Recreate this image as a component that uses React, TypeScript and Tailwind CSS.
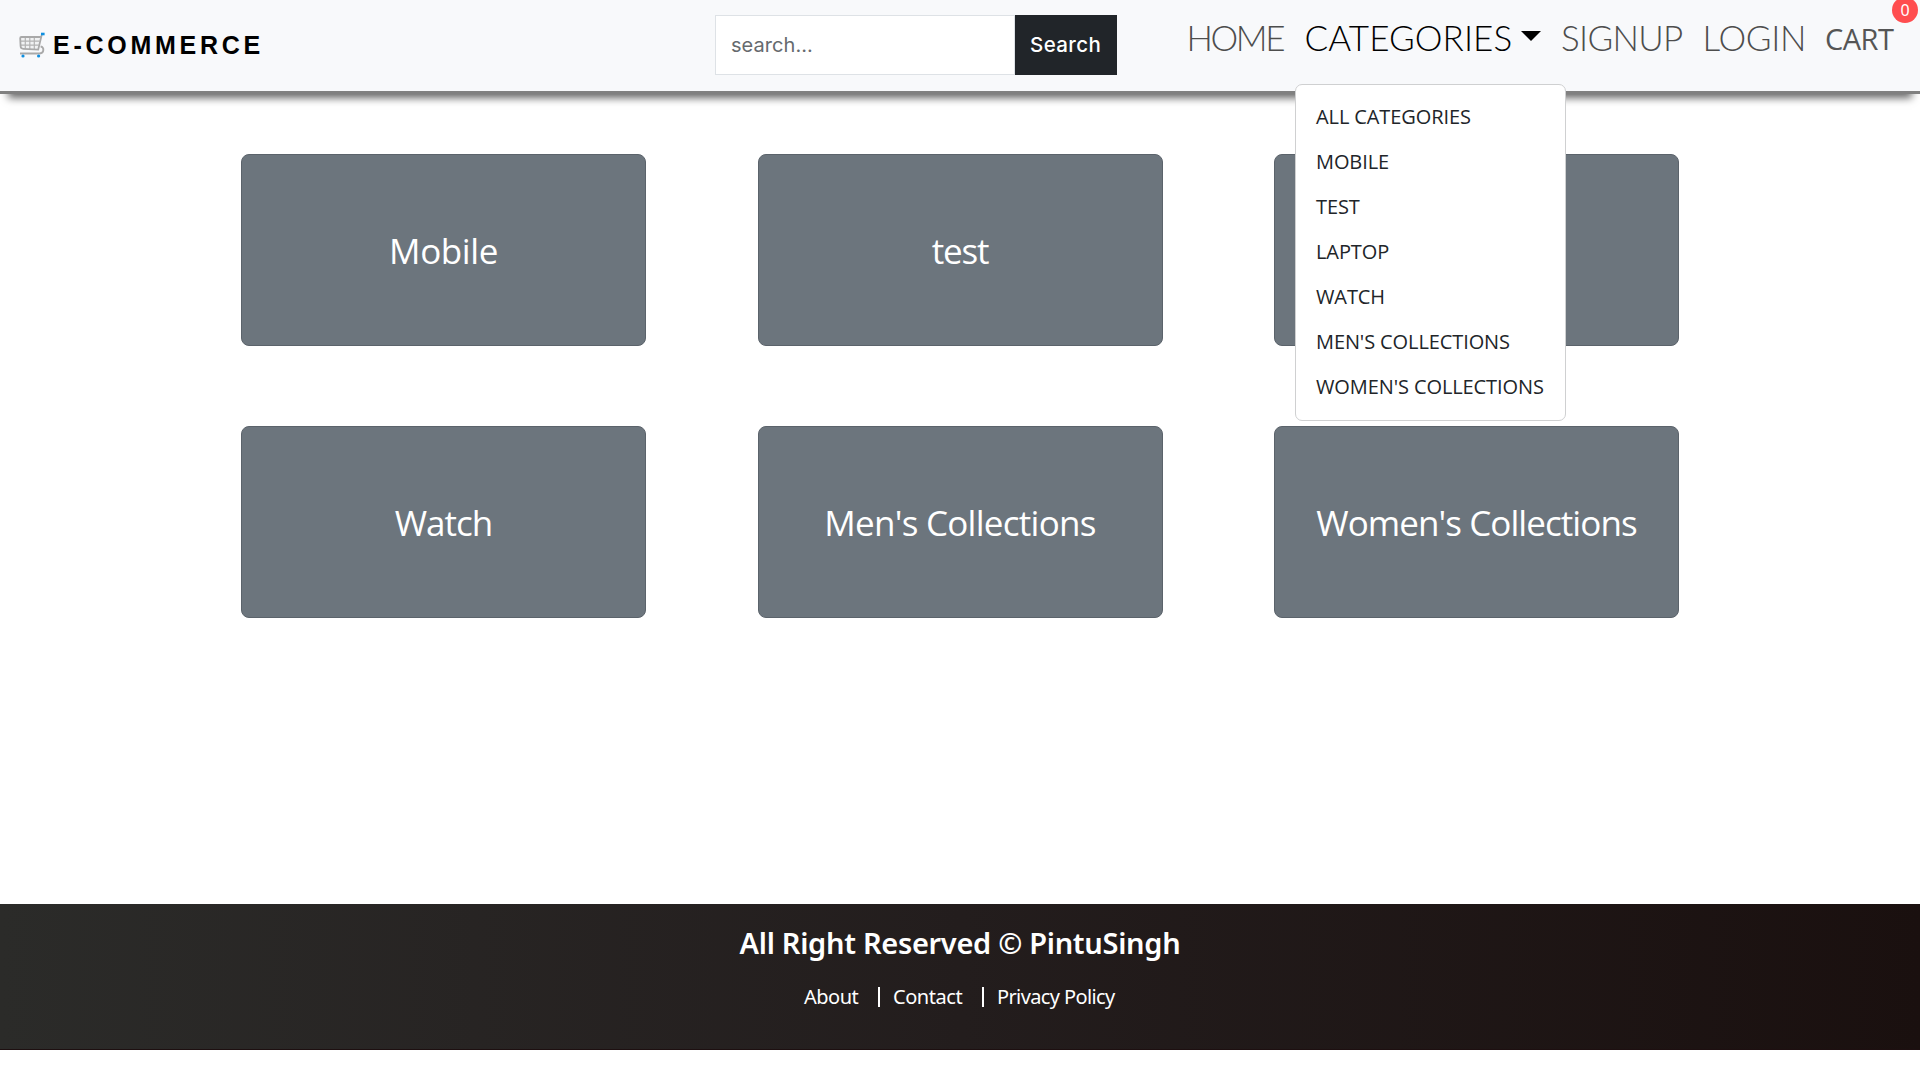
const menuItems = [
  'ALL CATEGORIES',
  'MOBILE',
  'TEST',
  'LAPTOP',
  'WATCH',
  "MEN'S COLLECTIONS",
  "WOMEN'S COLLECTIONS",
];

const cards = [
  { label: 'Mobile', tracking: 'tracking-[-0.4px]' },
  { label: 'test', tracking: 'tracking-[-1.2px]' },
  { label: 'Laptop', tracking: 'tracking-[-0.7px]' },
  { label: 'Watch', tracking: 'tracking-[-1px]' },
  { label: "Men's Collections", tracking: 'tracking-[-0.72px]' },
  { label: "Women's Collections", tracking: 'tracking-[-0.93px]' },
];

function CartLogo() {
  return (
    <svg width="26" height="27" viewBox="0 0 26 27" fill="none" className="shrink-0">
      <path d="M1.5 5.2H21.3L19 17.5L4 16.8C2.6 16.7 1.8 15.8 1.7 14.5Z" fill="#f1f2f3" />
      <path d="M1.5 9.2H20.5M1.8 13.2H19.7M6.3 5V16.8M10.8 5V17M15.3 5V17.2" stroke="#b3b3b3" strokeWidth="1.2" />
      <path d="M22.8 2.6L19.2 17.6L4.2 16.8C2.7 16.7 1.7 15.8 1.6 14.3L1.2 6.2C1.2 5.4 1.6 5 2.4 5H21.5" stroke="#a9a9a9" strokeWidth="1.8" />
      <path d="M21.6 14.3C25.6 15.2 25.2 21.4 20.8 21.5H1" stroke="#a9a9a9" strokeWidth="1.8" />
      <path d="M22 2H25.6" stroke="#0f8fe0" strokeWidth="2.6" />
      <circle cx="4" cy="24" r="1.6" fill="#0f8fe0" />
      <circle cx="19.6" cy="24" r="1.6" fill="#0f8fe0" />
    </svg>
  );
}

function Header() {
  return (
    <header className="relative z-10 flex h-[94px] border-b-[3px] border-[#808080] bg-[#f8f9fb] shadow-[0_12px_8px_-8px_rgba(0,0,0,0.6)]">
      <div className="flex w-[715px] items-center pl-[19px] font-['Liberation_Sans',sans-serif] text-[25px] font-bold tracking-[3.73px] text-black">
        <CartLogo />
        <span className="ml-[8px]">E-COMMERCE</span>
      </div>

      <form className="mt-[15px] flex h-[60px] w-[402px] font-['Inter',sans-serif] text-[20px]">
        <input
          className="w-[300px] border border-[#dee2e6] bg-white pl-[15px] tracking-[0.05px] outline-none placeholder:text-[#666a6e]"
          placeholder="search..."
        />
        <button type="button" className="w-[102px] bg-[#212529] pl-[15px] text-left text-[20.5px] font-medium tracking-[0.4px] text-white">
          Search
        </button>
      </form>

      <nav className="ml-[69.5px] flex font-['Lato',sans-serif] text-[35px] leading-[42px] font-light text-[#4d4d4d]">
        <a className="w-[118px] pt-[16px] tracking-[-2.4px]">HOME</a>
        <div className="relative w-[256.5px] pt-[16px]">
          <a className="flex tracking-[0.08px] text-black">
            CATEGORIES
            <span className="mt-[15px] ml-[9px] size-0 border-x-[10px] border-t-[10px] border-x-transparent border-t-black" />
          </a>
          <ul className="absolute top-[84px] -left-[9.5px] h-[337px] w-[271px] rounded-[7px] border border-[#cfd0d1] bg-white pt-[9px] pl-[20px] font-['Open_Sans',sans-serif] text-[20px] leading-[45px] font-normal tracking-[-0.1px] text-[#212529]">
            {menuItems.map((label) => (
              <li key={label} className="whitespace-nowrap">
                {label}
              </li>
            ))}
          </ul>
        </div>
        <a className="w-[141.5px] pt-[16px] tracking-[-0.69px]">SIGNUP</a>
        <a className="w-[122.5px] pt-[16px] tracking-[-0.31px]">LOGIN</a>
        <a className="relative w-[95px] pt-[18px] font-['Open_Sans',sans-serif] text-[29px] font-normal tracking-[-0.5px] text-[#555]">
          CART
          <span className="absolute -top-[3px] left-[67px] flex size-[26px] items-center justify-center rounded-full bg-[#ff4d4f] font-['Noto_Sans',sans-serif] text-[16px] leading-none tracking-normal text-white">
            0
          </span>
        </a>
      </nav>
    </header>
  );
}

export default function App() {
  return (
    <div className="h-[1080px] w-[1920px] overflow-hidden bg-white">
      <Header />

      <main className="ml-[241px] grid h-[810px] w-[1438px] grid-cols-[repeat(3,405px)] content-start justify-between gap-y-20 pt-[60px] font-['Open_Sans',sans-serif]">
        {cards.map((card) => (
          <div
            key={card.label}
            className={`flex h-[192px] items-center justify-center rounded-[8px] border border-[#5b636b] bg-[#6c757d] pt-[2px] text-[35px] text-white ${card.tracking}`}
          >
            {card.label}
          </div>
        ))}
      </main>

      <footer className="h-[146px] border-b border-[#1d0f10] bg-linear-to-r from-[#2b2b29] via-[#231d1d] to-[#1a100f] font-['Noto_Sans',sans-serif] text-white">
        <h2 className="text-center text-[29px] leading-[78px] font-semibold tracking-[-0.3px]">All Right Reserved © PintuSingh</h2>
        <div className="mx-auto flex w-[312px] items-center text-[20px] leading-[30px] whitespace-nowrap">
          <a className="w-[74px] tracking-[-0.51px]">About</a>
          <span className="mr-[13px] h-5 w-[2px] bg-white" />
          <a className="w-[89px] tracking-[-0.44px]">Contact</a>
          <span className="mr-[13px] h-5 w-[2px] bg-white" />
          <a className="tracking-[-0.62px]">Privacy Policy</a>
        </div>
      </footer>
    </div>
  );
}
